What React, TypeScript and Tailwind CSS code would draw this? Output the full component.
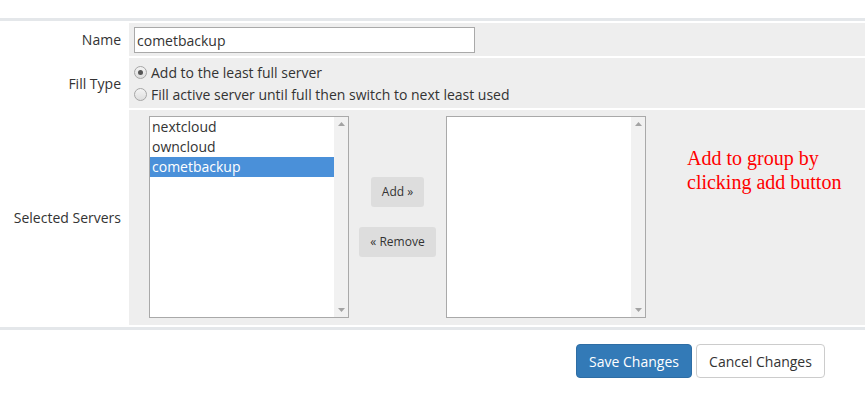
import React from "react";

function Radio({ checked }: { checked?: boolean }) {
  return (
    <span className="flex h-[13px] w-[13px] shrink-0 items-center justify-center rounded-full border border-[#a6a6a6] bg-gradient-to-b from-[#f4f4f4] to-[#dedede]">
      {checked && <span className="h-[5px] w-[5px] rounded-full bg-[#555]" />}
    </span>
  );
}

function ListBox({ items, selected }: { items: string[]; selected?: number }) {
  return (
    <div className="flex h-[202px] w-[200px] shrink-0 border border-[#a9a9a9] bg-white">
      <div className="flex flex-1 flex-col">
        {items.map((it, i) => (
          <div
            key={it}
            className={
              "h-[20px] pl-[2px] text-[14px] leading-[20px] " +
              (i === selected ? "bg-[#4a90d9] text-white" : "text-[#333]")
            }
          >
            {it}
          </div>
        ))}
      </div>
      <div className="flex w-[14px] flex-col items-center justify-between bg-[#f1f1f1] py-[5px]">
        <svg width="7" height="4" viewBox="0 0 7 4">
          <path d="M3.5 0 L7 4 L0 4 Z" fill="#a3a3a3" />
        </svg>
        <svg width="7" height="4" viewBox="0 0 7 4">
          <path d="M0 0 L7 0 L3.5 4 Z" fill="#a3a3a3" />
        </svg>
      </div>
    </div>
  );
}

export default function App() {
  return (
    <div
      className="h-[417px] w-[865px] overflow-hidden bg-white text-[14px] text-[#333]"
      style={{ fontFamily: '"Open Sans", "Noto Sans", sans-serif' }}
    >
      <div className="h-[18px]" />
      <div className="flex flex-col gap-[2px] border-y-[3px] border-[#e4e7ea] py-[2px]">
        {/* Name */}
        <div className="flex h-[33px] gap-[2px]">
          <div className="flex w-[127px] items-center justify-end pr-[6px]">Name</div>
          <div className="flex flex-1 items-start bg-[#eeeeee] pl-[5px] pt-[4px]">
            <div className="flex h-[26px] w-[341px] items-center border border-[#a9a9a9] bg-white pl-[2px] text-[14px]">
              cometbackup
            </div>
          </div>
        </div>
        {/* Fill Type */}
        <div className="flex h-[50px] gap-[2px]">
          <div className="flex w-[127px] items-center justify-end pr-[6px]">Fill Type</div>
          <div className="flex flex-1 flex-col bg-[#eeeeee] pl-[5px] pt-[3px]">
            <label className="flex h-[22px] items-center gap-[4px]">
              <Radio checked />
              <span>Add to the least full server</span>
            </label>
            <label className="flex h-[22px] items-center gap-[4px]">
              <Radio />
              <span>Fill active server until full then switch to next least used</span>
            </label>
          </div>
        </div>
        {/* Selected Servers */}
        <div className="flex h-[215px] gap-[2px]">
          <div className="flex w-[127px] items-center justify-end pr-[6px]">Selected Servers</div>
          <div className="flex flex-1 items-start bg-[#eeeeee] pl-[20px] pt-[6px]">
            <ListBox items={["nextcloud", "owncloud", "cometbackup"]} selected={2} />
            <div className="flex h-[202px] w-[97px] shrink-0 flex-col items-center justify-center gap-[20px]">
              <button className="h-[30px] w-[53px] rounded-[3px] bg-[#dddddd] text-[12px] text-[#333]">
                Add »
              </button>
              <button className="h-[30px] w-[77px] rounded-[3px] bg-[#dddddd] text-[12px] text-[#333]">
                « Remove
              </button>
            </div>
            <ListBox items={[]} />
            <div
              className="ml-[41px] mt-[30px] text-[20px] leading-[24px] text-[#ff0000]"
              style={{ fontFamily: '"Liberation Serif", "Times New Roman", serif' }}
            >
              Add to group by
              <br />
              clicking add button
            </div>
          </div>
        </div>
      </div>
      <div className="flex justify-end gap-[4px] pr-[40px] pt-[14px]">
        <button className="h-[34px] w-[116px] rounded-[4px] border border-[#2e6da4] bg-[#337ab7] text-[14px] text-white">
          Save Changes
        </button>
        <button className="h-[34px] w-[129px] rounded-[4px] border border-[#cccccc] bg-white text-[14px] text-[#333]">
          Cancel Changes
        </button>
      </div>
    </div>
  );
}
